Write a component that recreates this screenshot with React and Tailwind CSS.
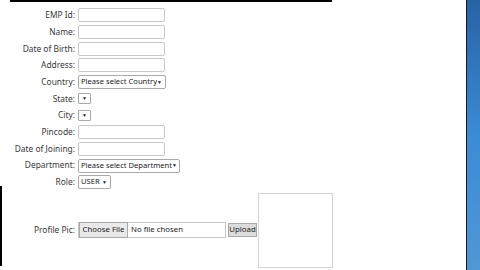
import React from "react";

const font = { fontFamily: '"Noto Sans", "Open Sans", Arial, sans-serif' };

function Label({ children }) {
  return <div className="whitespace-nowrap pr-[2px] text-right text-[8.4px] leading-none text-[#3a3a3a]">{children}</div>;
}

function TextBox() {
  return <div className="h-[14px] w-[87px] rounded-[2px] border border-[#c8c8c8] bg-white" />;
}

function Select({ text, width }) {
  return (
    <div
      className="flex h-[14px] items-center justify-between whitespace-nowrap rounded-[2px] border border-[#a9a9a9] bg-white pl-[2px] pr-[3px] text-[7.6px] leading-none text-[#222]"
      style={{ width }}
    >
      <span>{text}</span>
      <span className="text-[5px]">▼</span>
    </div>
  );
}

function SmallSelect() {
  return (
    <div className="flex h-[11px] w-[13px] items-center justify-center rounded-[1px] border border-[#a9a9a9] bg-white text-[5px] leading-none text-[#222]">
      ▼
    </div>
  );
}

const rows = [
  ["EMP Id:", <TextBox />],
  ["Name:", <TextBox />],
  ["Date of Birth:", <TextBox />],
  ["Address:", <TextBox />],
  ["Country:", <Select text="Please select Country" width="88px" />],
  ["State:", <SmallSelect />],
  ["City:", <SmallSelect />],
  ["Pincode:", <TextBox />],
  ["Date of Joining:", <TextBox />],
  ["Department:", <Select text="Please select Department" width="102px" />],
  ["Role:", <Select text="USER" width="33px" />],
];

export default function App() {
  return (
    <div className="flex h-[270px] w-[480px] overflow-hidden bg-white" style={font}>
      <div className="flex w-[2px] shrink-0 flex-col">
        <div className="h-[186px] shrink-0" />
        <div className="h-[80px] shrink-0 bg-black" />
      </div>
      <div className="flex w-[464px] shrink-0 flex-col">
        <div className="ml-[8px] h-[2px] w-[322px] shrink-0 bg-black" />
        <div className="mt-[5px] flex shrink-0 flex-col">
          {rows.map(([label, field]) => (
            <div key={label} className="grid h-[16.7px] shrink-0 grid-cols-[75px_auto] items-center">
              <Label>{label}</Label>
              <div className="pl-px">{field}</div>
            </div>
          ))}
          <div className="grid h-[79px] shrink-0 grid-cols-[75px_auto] items-center">
            <Label>Profile Pic:</Label>
            <div className="flex items-center pl-px">
              <div className="flex h-[16px] w-[148px] items-center border border-[#c8c8c8] bg-white">
                <div className="flex h-[16px] w-[49px] items-center justify-center whitespace-nowrap border border-[#a9a9a9] bg-[#e9e9e9] text-[7.8px] leading-none text-[#222]">
                  Choose File
                </div>
                <span className="whitespace-nowrap pl-[3px] text-[7.8px] leading-none text-[#222]">No file chosen</span>
              </div>
              <div className="ml-[2px] flex h-[14px] w-[29px] items-center justify-center border border-[#a9a9a9] bg-[#dcdcdc] text-[7.8px] leading-none text-[#222]">
                Upload
              </div>
              <div className="ml-px h-[75px] w-[75px] border border-[#d4d4d4] bg-white" />
            </div>
          </div>
          <div className="grid h-[16.7px] shrink-0 grid-cols-[75px_auto] items-start">
            <Label>Password:</Label>
            <div className="pl-px">
              <TextBox />
            </div>
          </div>
        </div>
      </div>
      <div className="w-px shrink-0 bg-[#0d1c2e]" />
      <div className="w-[13px] shrink-0 bg-gradient-to-b from-[#2862a6] via-[#3a8cd6] to-[#4f97d6]" />
    </div>
  );
}
